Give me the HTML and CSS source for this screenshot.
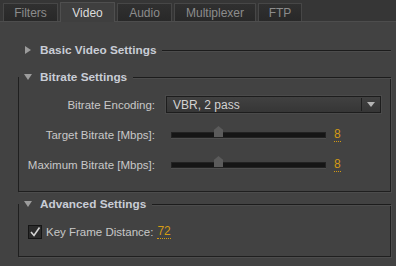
FILE: index.html
```html
<!DOCTYPE html>
<html lang="en">
<head>
    <meta charset="UTF-8">
    <title>Export Settings - Video</title>
    <link rel="stylesheet" href="styles.css">
</head>
<body>
    <div class="tabs">
        <div class="tab">Filters</div>
        <div class="tab active">Video</div>
        <div class="tab">Audio</div>
        <div class="tab wide">Multiplexer</div>
        <div class="tab small">FTP</div>
    </div>

    <div class="panel">
        <div class="section-head closed">
            <span class="twisty right"></span>
            <span class="title">Basic Video Settings</span>
            <span class="rule"></span>
        </div>

        <div class="group bitrate">
            <div class="section-head">
                <span class="twisty down"></span>
                <span class="title">Bitrate Settings</span>
                <span class="rule"></span>
            </div>
            <div class="rows">
                <div class="label">Bitrate Encoding:</div>
                <div class="select">
                    <span class="select-text">VBR, 2 pass</span>
                    <span class="select-arrow"></span>
                </div>

                <div class="label">Target Bitrate [Mbps]:</div>
                <div class="slider-row">
                    <div class="slider"><span class="thumb"></span></div>
                    <span class="value">8</span>
                </div>

                <div class="label">Maximum Bitrate [Mbps]:</div>
                <div class="slider-row">
                    <div class="slider"><span class="thumb"></span></div>
                    <span class="value">8</span>
                </div>
            </div>
        </div>

        <div class="group advanced">
            <div class="section-head">
                <span class="twisty down"></span>
                <span class="title">Advanced Settings</span>
                <span class="rule"></span>
            </div>
            <div class="check-row">
                <span class="checkbox">
                    <svg width="12" height="12" viewBox="0 0 12 12"><path d="M2 6 L5 9.5 L10.5 1.5" fill="none" stroke="#d4d4d4" stroke-width="1.6"/></svg>
                </span>
                <span class="check-label">Key Frame Distance:</span>
                <span class="value">72</span>
            </div>
        </div>
    </div>
</body>
</html>
```

FILE: styles.css
```css
body {
    margin: 0;
    background: #424242;
    font-family: "Liberation Sans", Arial, sans-serif;
    font-size: 11.5px;
    color: #c8c8c8;
    width: 396px;
    height: 266px;
    overflow: hidden;
}
.tabs {
    display: flex;
    gap: 2px;
    height: 22px;
    padding-left: 3px;
    background: #363636;
    border-bottom: 1px solid #4d4d4d;
    box-sizing: border-box;
    align-items: flex-end;
}
.tab {
    width: 55px;
    height: 18px;
    box-sizing: border-box;
    border: 1px solid #474747;
    border-bottom: none;
    background: linear-gradient(#303030, #282828);
    color: #8c8c8c;
    font-size: 12px;
    display: flex;
    align-items: center;
    justify-content: center;
    border-radius: 1px 1px 0 0;
}
.tab.wide {
    width: 82px;
}
.tab.small {
    width: 44px;
}
.tab.active {
    height: 20px;
    margin-bottom: -1px;
    background: #3f3f3f;
    border-color: #4f4f4f;
    color: #dcdcdc;
}
.panel {
    padding: 21px 5px 0 18px;
}
.section-head {
    display: flex;
    align-items: center;
    height: 14px;
}
.twisty {
    width: 0;
    height: 0;
    margin-left: 7px;
    margin-right: 9px;
}
.twisty.right {
    border-top: 4px solid transparent;
    border-bottom: 4px solid transparent;
    border-left: 6px solid #9c9c9c;
}
.twisty.down {
    margin-left: 6px;
    margin-right: 8px;
    border-left: 4px solid transparent;
    border-right: 4px solid transparent;
    border-top: 6px solid #9c9c9c;
}
.title {
    font-weight: bold;
    font-size: 11.8px;
    color: #c9cdd6;
    margin-right: 6px;
}
.rule {
    flex: 1;
    height: 1px;
    background: #1c1c1c;
    box-shadow: 0 1px 0 #4c4c4c;
}
.group {
    display: flex;
    flex-direction: column;
    border: 1px solid #1f1f1f;
    border-top: none;
    box-shadow: 1px 1px 0 #4c4c4c;
}
.group .section-head {
    margin-top: -7px;
    margin-left: -1px;
    margin-right: -1px;
}
.bitrate {
    margin-top: 20px;
    height: 115px;
    box-sizing: border-box;
}
.advanced {
    margin-top: 12px;
    height: 53px;
    box-sizing: border-box;
}
.rows {
    display: grid;
    grid-template-columns: 136px 1fr;
    grid-template-rows: 31px 30px 30px;
    column-gap: 11px;
    margin-top: 5px;
    align-items: center;
}
.label {
    text-align: right;
}
.select {
    width: 215px;
    height: 17px;
    box-sizing: border-box;
    border: 1px solid #1d1d1d;
    box-shadow: 0 0 0 1px #4a4a4a;
    background: linear-gradient(#414141, #363636);
    display: flex;
    align-items: center;
}
.select-text {
    flex: 1;
    padding-left: 6px;
    font-size: 12px;
    color: #d2d2d2;
}
.select-arrow {
    width: 18px;
    height: 13px;
    border-left: 1px solid #1f1f1f;
    position: relative;
}
.select-arrow::after {
    content: "";
    position: absolute;
    left: 5px;
    top: 4px;
    border-left: 4px solid transparent;
    border-right: 4px solid transparent;
    border-top: 5px solid #b4b4b4;
}
.slider-row {
    display: flex;
    align-items: center;
    padding-left: 5px;
}
.slider {
    width: 153px;
    height: 4px;
    background: #151515;
    border: 1px solid #222;
    box-shadow: 0 1px 0 #4e4e4e;
    position: relative;
}
.thumb {
    position: absolute;
    left: 42px;
    top: -7px;
    width: 9px;
    height: 11px;
    background: #5b5b5b;
    clip-path: polygon(50% 0, 100% 35%, 100% 100%, 0 100%, 0 35%);
}
.value {
    color: #d49a14;
    font-size: 12px;
    border-bottom: 1px dotted #d49a14;
    line-height: 12px;
    padding-bottom: 1px;
    margin-left: 8px;
}
.check-row {
    display: flex;
    align-items: center;
    margin-top: 14px;
    padding-left: 9px;
}
.checkbox {
    width: 12px;
    height: 12px;
    border: 1px solid #151515;
    background: #2b2b2b;
    margin-right: 4px;
    display: flex;
}
.check-row .value {
    margin-left: 4px;
}
```
